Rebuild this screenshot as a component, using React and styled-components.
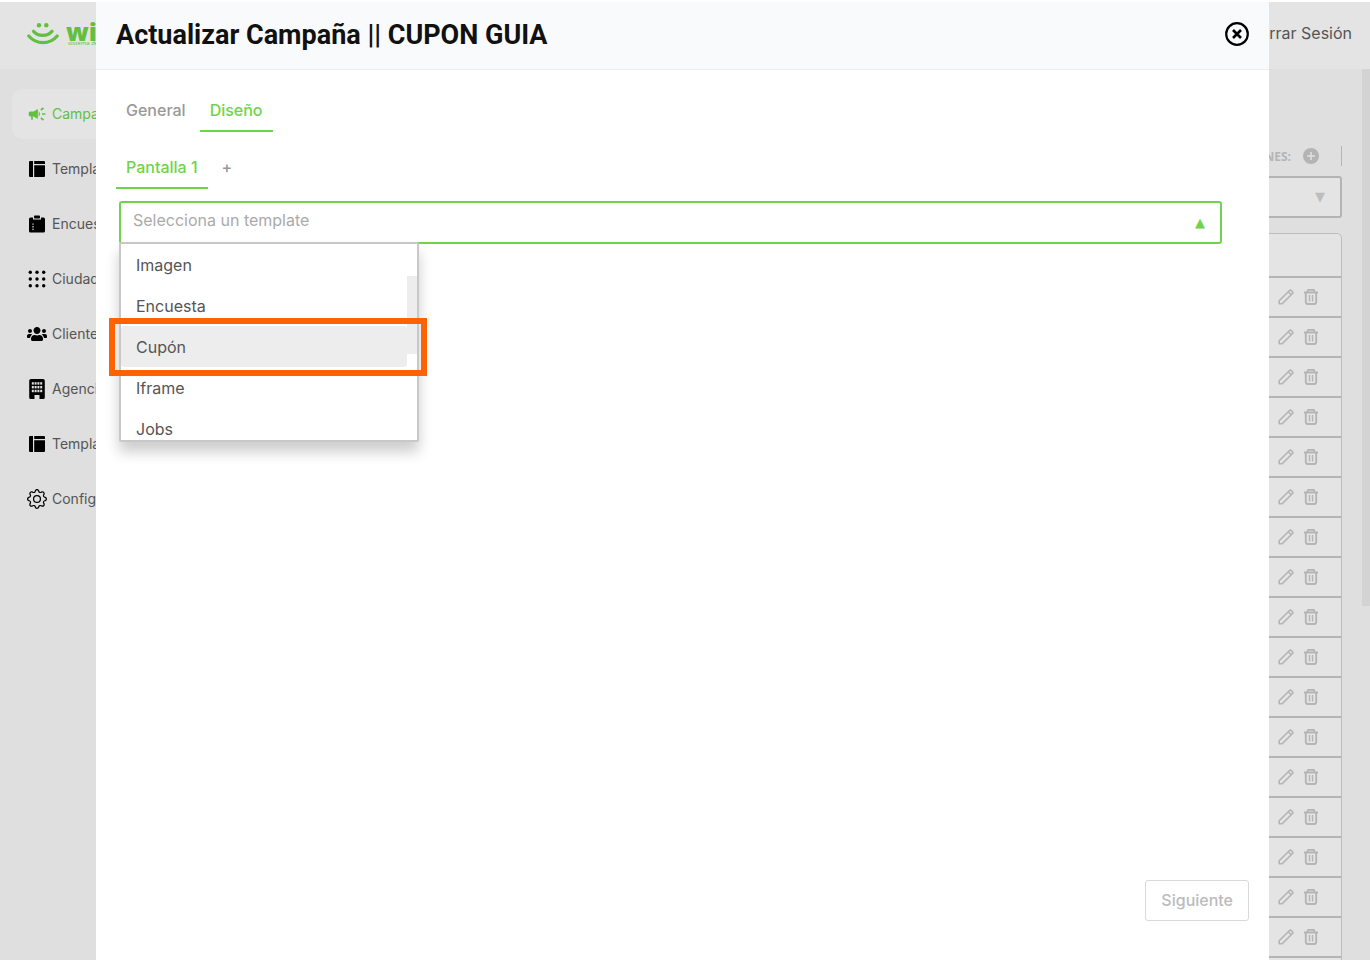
import styled, { createGlobalStyle, css } from "styled-components";
import { MdCampaign } from "react-icons/md";
import { FaUsers } from "react-icons/fa";
import { BsGear } from "react-icons/bs";

const ROWS = 18;

const OPTIONS = ["Imagen", "Encuesta", "Cupón", "Iframe", "Jobs"];

const MENU = [
  { label: "Campañas", icon: MdCampaign, active: true },
  { label: "Templates", icon: TemplateIcon },
  { label: "Encuestas", icon: ClipboardIcon },
  { label: "Ciudades", icon: DotsIcon },
  { label: "Clientes", icon: FaUsers },
  { label: "Agencias", icon: BuildingIcon },
  { label: "Templates", icon: TemplateIcon },
  { label: "Configuración", icon: BsGear },
];

function App() {
  return (
    <>
      <GlobalStyle />
      <Screen>
        <Page>
          <TopBar>
            <Logo>
              <SmileIcon />
              <LogoText>
                <LogoName>wi</LogoName>
                <LogoSlogan>sistema de</LogoSlogan>
              </LogoText>
            </Logo>
            <LogoutLink href="#salir">Cerrar Sesión</LogoutLink>
          </TopBar>
          <Content>
            <Sidebar>
              {MENU.map(({ label, icon: Icon, active }, i) => (
                <MenuLink key={i} href="#menu" $active={active}>
                  <Icon size={20} />
                  {label}
                </MenuLink>
              ))}
            </Sidebar>
            <Main>
              <Actions>
                <ActionsLabel>ACCIONES:</ActionsLabel>
                <AddButton type="button" aria-label="Agregar">
                  <PlusCircleIcon />
                </AddButton>
                <Divider />
              </Actions>
              <Filter>
                <FilterSelect aria-label="Filtro" />
                <Caret $color="#bdbdbd">▼</Caret>
              </Filter>
              <Table>
                <thead>
                  <tr>
                    <HeadCell />
                  </tr>
                </thead>
                <tbody>
                  {Array.from({ length: ROWS }, (_, i) => (
                    <tr key={i}>
                      <Cell>
                        <RowActions>
                          <RowButton type="button" aria-label="Editar">
                            <PencilIcon />
                          </RowButton>
                          <RowButton type="button" aria-label="Eliminar">
                            <TrashIcon />
                          </RowButton>
                        </RowActions>
                      </Cell>
                    </tr>
                  ))}
                </tbody>
              </Table>
            </Main>
            <PageScroll />
          </Content>
        </Page>
        <CampaignModal />
      </Screen>
    </>
  );
}

export default App;

function CampaignModal() {
  return (
    <Modal role="dialog" aria-labelledby="modal-title">
      <ModalHeader>
        <ModalTitle id="modal-title">
          Actualizar Campaña || CUPON GUIA
        </ModalTitle>
        <CloseButton type="button" aria-label="Cerrar">
          <CloseIcon />
        </CloseButton>
      </ModalHeader>
      <ModalBody>
        <Tabs>
          <Tab type="button">General</Tab>
          <Tab type="button" $active>
            Diseño
          </Tab>
        </Tabs>
        <Tabs>
          <Tab type="button" $active>
            Pantalla 1
          </Tab>
          <Tab type="button" aria-label="Agregar pantalla">
            +
          </Tab>
        </Tabs>
        <TemplateField>
          <TemplateSelect aria-label="Template" defaultValue="">
            <option value="">Selecciona un template</option>
          </TemplateSelect>
          <Caret $color="#6fd44b">▲</Caret>
          <Dropdown>
            <OptionList role="listbox">
              {OPTIONS.map((name) => (
                <Option
                  key={name}
                  role="option"
                  aria-selected={name === "Cupón"}
                >
                  {name}
                </Option>
              ))}
            </OptionList>
            <ListScroll />
            <Highlight />
          </Dropdown>
        </TemplateField>
      </ModalBody>
      <ModalFooter>
        <NextButton type="button" disabled>
          Siguiente
        </NextButton>
      </ModalFooter>
    </Modal>
  );
}

function SmileIcon() {
  return (
    <svg width="32" height="24" viewBox="0 0 32 24" fill="none">
      <circle cx="12" cy="3.200" r="2.200" fill="#62bf40" />
      <circle cx="19.300" cy="3.200" r="2.200" fill="#62bf40" />
      <path
        d="M6.500 9.300c5 5.400 13.500 5.400 18.500 0M1.800 14c7.500 8.800 21 8.800 28.400 0"
        stroke="#62bf40"
        strokeWidth="3.200"
        strokeLinecap="round"
      />
    </svg>
  );
}

function TemplateIcon() {
  return (
    <svg width="20" height="20" viewBox="0 0 20 20">
      <path d="M3 2h3v16H3a1 1 0 0 1-1-1V3a1 1 0 0 1 1-1zM7.2 2H17a1 1 0 0 1 1 1v2H7.2zM7.2 6.2H18V17a1 1 0 0 1-1 1H7.2z" />
    </svg>
  );
}

function ClipboardIcon() {
  return (
    <svg width="20" height="20" viewBox="0 0 20 20">
      <path d="M3.5 3.5H6v2h8v-2h2.500a1.500 1.500 0 0 1 1.500 1.500v12a1.500 1.500 0 0 1-1.500 1.500h-13A1.500 1.500 0 0 1 2 17V5a1.500 1.500 0 0 1 1.500-1.500z" />
      <rect x="7" y="1.500" width="6" height="3" rx="0.800" />
      <path d="M6 9.500v7" stroke="#dfdfdf" strokeWidth="1.200" strokeDasharray="1.300 1.300" />
    </svg>
  );
}

function DotsIcon() {
  const steps = [3.3, 10, 16.7];
  return (
    <svg width="20" height="20" viewBox="0 0 20 20">
      {steps.map((y) =>
        steps.map((x) => <circle key={`${x}-${y}`} cx={x} cy={y} r="1.700" />)
      )}
    </svg>
  );
}

function BuildingIcon() {
  const cols = [4.8, 7.6, 10.4, 13.2];
  const rows = [3.2, 7, 10.8];
  return (
    <svg width="20" height="20" viewBox="0 0 20 20">
      <path d="M4 0h12a1.800 1.800 0 0 1 1.800 1.800V18.500a1.500 1.500 0 0 1-1.500 1.500H12.500v-4h-5v4H3.700a1.500 1.500 0 0 1-1.500-1.500V1.800A1.800 1.800 0 0 1 4 0z" />
      {rows.map((y) =>
        cols.map((x) => (
          <rect key={`${x}-${y}`} x={x} y={y} width="2" height="2.400" fill="#dfdfdf" />
        ))
      )}
    </svg>
  );
}

function PlusCircleIcon() {
  return (
    <svg width="16" height="16" viewBox="0 0 16 16">
      <circle cx="8" cy="8" r="8" fill="#b4b4b4" />
      <path d="M8 4v8M4 8h8" stroke="#dfdfdf" strokeWidth="1.600" />
    </svg>
  );
}

function PencilIcon() {
  return (
    <svg width="16" height="16" viewBox="0 0 16 16" fill="none" stroke="#b4b4b4">
      <path
        d="M1.200 14.800v-3L11.500 1.500a1.200 1.200 0 0 1 1.700 0l1.300 1.300a1.200 1.200 0 0 1 0 1.700L4.200 14.800zM10.200 2.800l3 3"
        strokeWidth="1.600"
        strokeLinejoin="round"
      />
    </svg>
  );
}

function TrashIcon() {
  return (
    <svg width="16" height="16" viewBox="0 0 16 16" fill="none" stroke="#b4b4b4">
      <path d="M1 3.500h14M4.700 3V1.800a1 1 0 0 1 1-1h4.600a1 1 0 0 1 1 1V3" strokeWidth="1.800" />
      <path d="M2.800 3.500v9.500a2 2 0 0 0 2 2h6.400a2 2 0 0 0 2-2V3.500" strokeWidth="1.900" />
      <path d="M6.500 6v6.500M9.500 6v6.500" strokeWidth="1.400" />
    </svg>
  );
}

function CloseIcon() {
  return (
    <svg width="24" height="24" viewBox="0 0 24 24" fill="none" stroke="#000">
      <circle cx="12" cy="12" r="10.800" strokeWidth="2.200" />
      <path d="M8 8l8 8M16 8l-8 8" strokeWidth="2.600" />
    </svg>
  );
}

const GlobalStyle = createGlobalStyle`
  * {
    box-sizing: border-box;
  }

  body {
    margin: 0;
    background: white;
    color: #555;
    font-family: Inter, sans-serif;
    font-size: 16px;
  }

  button,
  select {
    font-family: inherit;
    font-size: inherit;
  }

  svg {
    display: block;
    flex-shrink: 0;
  }
`;

const Screen = styled.div`
  position: relative;
  height: 100vh;
  padding: 2px 0 3px;
  overflow: hidden;
`;

const Page = styled.div`
  display: flex;
  flex-direction: column;
  height: 100%;
  background: #dfdfdf;
`;

const TopBar = styled.header`
  display: flex;
  align-items: center;
  justify-content: space-between;
  flex-shrink: 0;
  height: 67px;
  padding: 0 18px 4px 27px;
  background: #e4e4e4;
`;

const Logo = styled.div`
  display: flex;
  align-items: center;
  gap: 7px;
  color: #62bf40;
`;

const LogoText = styled.div`
  display: flex;
  flex-direction: column;
`;

const LogoName = styled.span`
  font-family: "Open Sans", sans-serif;
  font-size: 25px;
  font-weight: 800;
  line-height: 18px;
`;

const LogoSlogan = styled.span`
  padding-left: 2px;
  font-family: "Open Sans", sans-serif;
  font-size: 6px;
  line-height: 6px;
`;

const LogoutLink = styled.a`
  padding-bottom: 2px;
  color: #555;
  text-decoration: none;
`;

const Content = styled.div`
  display: flex;
  flex: 1;
  min-height: 0;
`;

const Sidebar = styled.nav`
  display: flex;
  flex-direction: column;
  gap: 5px;
  width: 200px;
  padding: 20px 12px;
`;

const MenuLink = styled.a`
  display: flex;
  align-items: center;
  gap: 5px;
  height: 50px;
  padding: 0 15px;
  border-radius: 10px;
  color: #555;
  font-size: 14px;
  font-weight: 400;
  line-height: 18px;
  text-decoration: none;

  svg {
    fill: black;
  }

  ${({ $active }) =>
    $active &&
    css`
      background: #e4e4e4;
      color: #62bf40;

      svg {
        fill: #62bf40;
      }
    `}
`;

const Main = styled.main`
  display: flex;
  flex-direction: column;
  flex: 1;
  padding: 77px 20px 0 0;
  overflow: hidden;
`;

const Actions = styled.div`
  display: flex;
  align-items: center;
  justify-content: flex-end;
  height: 20px;
  margin-bottom: 10px;
`;

const ActionsLabel = styled.span`
  color: #b4b4b4;
  font-family: "Open Sans", sans-serif;
  font-size: 12px;
  font-weight: 700;
`;

const AddButton = styled.button`
  margin: 0 22px 0 12px;
  padding: 0;
  border: none;
  background: none;
`;

const Divider = styled.span`
  width: 1px;
  height: 20px;
  background: #b4b4b4;
`;

const Filter = styled.div`
  position: relative;
  margin-bottom: 15px;
`;

const FilterSelect = styled.select`
  display: block;
  width: 100%;
  height: 42px;
  border: 2px solid #b4b4b4;
  border-radius: 3px;
  background: #e4e4e4;
  appearance: none;
`;

const Caret = styled.span`
  position: absolute;
  top: 50%;
  right: 17px;
  color: ${({ $color }) => $color};
  font-family: "DejaVu Sans", sans-serif;
  font-size: 13px;
  line-height: 16px;
  transform: translateY(-50%);
  pointer-events: none;
`;

const Table = styled.table`
  width: 100%;
  border: 1px solid #bdbdbd;
  border-radius: 5px;
  border-spacing: 0;
  background: #e4e4e4;
`;

const HeadCell = styled.th`
  height: 44px;
  padding: 0;
  border-bottom: 2px solid #b4b4b4;
`;

const Cell = styled.td`
  height: 40px;
  padding: 0 22px 0 0;
  border-bottom: 2px solid #b4b4b4;
`;

const RowActions = styled.div`
  display: flex;
  justify-content: flex-end;
  gap: 9px;
`;

const RowButton = styled.button`
  padding: 0;
  border: none;
  background: none;
`;

const PageScroll = styled.div`
  width: 8px;
  height: 537px;
  background: #d3d3d3;
`;

const Modal = styled.section`
  position: absolute;
  top: 2px;
  right: 101px;
  bottom: 0;
  left: 96px;
  display: flex;
  flex-direction: column;
  background: white;
`;

const ModalHeader = styled.div`
  display: flex;
  align-items: center;
  justify-content: space-between;
  height: 68px;
  padding: 0 20px 4px;
  border-bottom: 1px solid #ebedef;
  background: #f9fafc;
`;

const ModalTitle = styled.h1`
  margin: 0;
  padding-top: 2px;
  color: #111;
  font-family: Roboto, sans-serif;
  font-size: 27px;
  font-weight: 700;
`;

const CloseButton = styled.button`
  padding: 0;
  border: none;
  background: none;
  cursor: pointer;
`;

const ModalBody = styled.div`
  flex: 1;
  padding: 20px 20px 0;
`;

const Tabs = styled.div`
  display: flex;
  gap: 4px;

  & + & {
    margin-top: 15px;
  }
`;

const Tab = styled.button`
  height: 42px;
  padding: 0 10px;
  border: none;
  border-bottom: 2px solid transparent;
  background: none;
  color: #999;
  font-size: 16px;
  font-weight: 500;
  cursor: pointer;

  ${({ $active }) =>
    $active &&
    css`
      border-color: #6fd44b;
      color: #6fd44b;
    `}
`;

const TemplateField = styled.div`
  position: relative;
  margin: 12px 27px 0 3px;
`;

const TemplateSelect = styled.select`
  display: block;
  width: 100%;
  height: 43px;
  padding: 0 12px 5px;
  border: 2px solid #6fd44b;
  border-radius: 3px;
  background: white;
  color: #aaa;
  appearance: none;
`;

const Dropdown = styled.div`
  position: absolute;
  top: 41px;
  left: 0;
  display: flex;
  width: 300px;
  height: 200px;
  border: 2px solid #c8c8c8;
  border-radius: 2px;
  background: white;
  box-shadow: 0 10px 14px rgba(0, 0, 0, 0.2);
`;

const OptionList = styled.ul`
  flex: 1;
  margin: 0;
  padding: 0;
  overflow: hidden;
  list-style: none;
`;

const Option = styled.li`
  height: 41px;
  padding: 0 15px;
  border-radius: 3px;
  line-height: 42px;

  &[aria-selected="true"] {
    background: #ededed;
  }
`;

const ListScroll = styled.div`
  width: 10px;
  height: 78px;
  margin-top: 32px;
  background: #ededed;
`;

const Highlight = styled.div`
  position: absolute;
  top: 74px;
  right: -10px;
  left: -12px;
  height: 58px;
  border: 6px solid #ff6200;
  pointer-events: none;
`;

const ModalFooter = styled.div`
  display: flex;
  justify-content: flex-end;
  padding: 0 20px 42px;
`;

const NextButton = styled.button`
  height: 41px;
  padding: 0 15px 2px;
  border: 1px solid #d9d9d9;
  border-radius: 3px;
  background: white;
  color: #bbb;
  font-weight: 500;
`;
